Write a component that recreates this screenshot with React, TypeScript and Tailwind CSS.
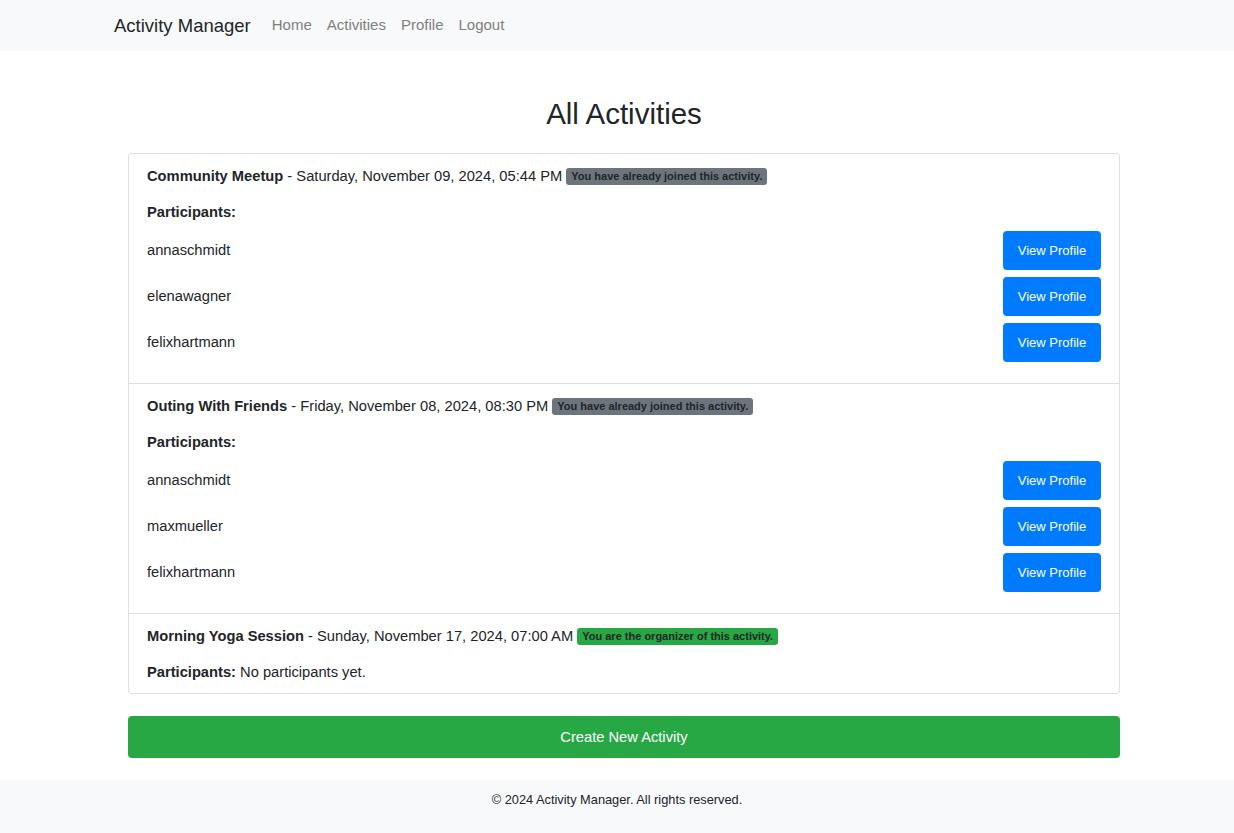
import React from "react";

type Activity = {
  title: string;
  date: string;
  badge: string;
  organizer?: boolean;
  participants: string[];
};

const activities: Activity[] = [
  {
    title: "Community Meetup",
    date: "Saturday, November 09, 2024, 05:44 PM",
    badge: "You have already joined this activity.",
    participants: ["annaschmidt", "elenawagner", "felixhartmann"],
  },
  {
    title: "Outing With Friends",
    date: "Friday, November 08, 2024, 08:30 PM",
    badge: "You have already joined this activity.",
    participants: ["annaschmidt", "maxmueller", "felixhartmann"],
  },
  {
    title: "Morning Yoga Session",
    date: "Sunday, November 17, 2024, 07:00 AM",
    badge: "You are the organizer of this activity.",
    organizer: true,
    participants: [],
  },
];

export default function App() {
  return (
    <div
      className="min-h-screen bg-white text-[#212529] flex flex-col"
      style={{ fontFamily: '"Liberation Sans", Arial, sans-serif' }}
    >
      {/* Navbar */}
      <nav className="bg-[#f8f9fa] h-[51px] flex items-center pl-[114px]">
        <span className="text-[18.5px] text-[#212529] mr-[21px]">Activity Manager</span>
        <div className="flex items-center gap-[15px] text-[15px] text-[#808080]">
          <a>Home</a>
          <a>Activities</a>
          <a>Profile</a>
          <a>Logout</a>
        </div>
      </nav>

      <main className="w-[992px] ml-[128px]">
        <h1 className="text-[29.5px] text-center mt-[45px] mb-[21px] leading-[36px]">All Activities</h1>

        {/* Activities list */}
        <div className="border border-[#dfdfdf] rounded-[3px]">
          {activities.map((a, i) => (
            <div
              key={a.title}
              className={`px-[18px] pt-[11px] ${a.participants.length ? "pb-[21px]" : "pb-[10px]"} ${
                i > 0 ? "border-t border-[#dfdfdf]" : ""
              }`}
            >
              <div className="text-[14.7px] leading-[22px] flex items-center">
                <span className="font-bold">{a.title}</span>
                <span className="whitespace-pre"> - {a.date} </span>
                <span
                  className={`px-[5px] h-[17px] flex items-center rounded-[3px] text-[11px] font-bold text-[#212529] ${
                    a.organizer ? "bg-[#28a745]" : "bg-[#6c757d]"
                  }`}
                >
                  {a.badge}
                </span>
              </div>
              <div className="text-[14.7px] leading-[22px] mt-[14px]">
                <span className="font-bold">Participants:</span>
                {a.participants.length === 0 && <span> No participants yet.</span>}
              </div>
              {a.participants.length > 0 && (
                <ul className="mt-[8px] flex flex-col gap-[7px]">
                  {a.participants.map((p) => (
                    <li key={p} className="flex items-center justify-between">
                      <span className="text-[14.7px]">{p}</span>
                      <button className="w-[98px] h-[39px] bg-[#007bff] text-white text-[13px] rounded-[4px]">
                        View Profile
                      </button>
                    </li>
                  ))}
                </ul>
              )}
            </div>
          ))}
        </div>

        <button className="w-full h-[42px] mt-[22px] bg-[#28a745] text-white text-[14.7px] rounded-[4px]">
          Create New Activity
        </button>
      </main>

      {/* Footer */}
      <footer className="bg-[#f8f9fa] mt-[22px] flex-1 min-h-[52px] pt-[10px] text-center text-[12.8px] text-[#212529]">
        © 2024 Activity Manager. All rights reserved.
      </footer>
    </div>
  );
}
